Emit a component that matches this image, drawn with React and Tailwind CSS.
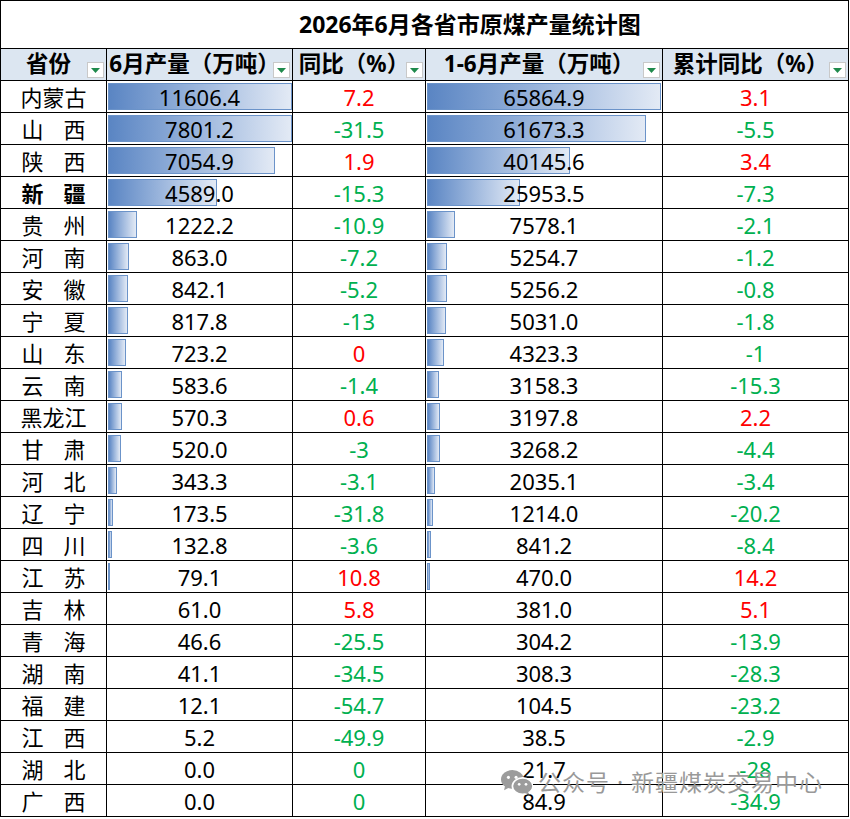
import React from "react";

const RED = "text-[#ff0000]";
const GREEN = "text-[#00b050]";

// [province, June output, yoy, Jan-Jun output, cumulative yoy, yoy red?, cum red?]
const rows = [
  ["内蒙古", 11606.4, "7.2", 65864.9, "3.1", true, true],
  ["山西", 7801.2, "-31.5", 61673.3, "-5.5", false, false],
  ["陕西", 7054.9, "1.9", 40145.6, "3.4", true, true],
  ["新疆", 4589.0, "-15.3", 25953.5, "-7.3", false, false],
  ["贵州", 1222.2, "-10.9", 7578.1, "-2.1", false, false],
  ["河南", 863.0, "-7.2", 5254.7, "-1.2", false, false],
  ["安徽", 842.1, "-5.2", 5256.2, "-0.8", false, false],
  ["宁夏", 817.8, "-13", 5031.0, "-1.8", false, false],
  ["山东", 723.2, "0", 4323.3, "-1", true, false],
  ["云南", 583.6, "-1.4", 3158.3, "-15.3", false, false],
  ["黑龙江", 570.3, "0.6", 3197.8, "2.2", true, true],
  ["甘肃", 520.0, "-3", 3268.2, "-4.4", false, false],
  ["河北", 343.3, "-3.1", 2035.1, "-3.4", false, false],
  ["辽宁", 173.5, "-31.8", 1214.0, "-20.2", false, false],
  ["四川", 132.8, "-3.6", 841.2, "-8.4", false, false],
  ["江苏", 79.1, "10.8", 470.0, "14.2", true, true],
  ["吉林", 61.0, "5.8", 381.0, "5.1", true, true],
  ["青海", 46.6, "-25.5", 304.2, "-13.9", false, false],
  ["湖南", 41.1, "-34.5", 308.3, "-28.3", false, false],
  ["福建", 12.1, "-54.7", 104.5, "-23.2", false, false],
  ["江西", 5.2, "-49.9", 38.5, "-2.9", false, false],
  ["湖北", 0.0, "0", 21.7, "-28", false, false],
  ["广西", 0.0, "0", 84.9, "-34.9", false, false],
];

const FilterBtn = () => (
  <span className="absolute right-[2px] bottom-[2px] w-[17px] h-[16px] bg-white border border-[#c9c9c9] flex items-center justify-center">
    <svg width="9" height="5" viewBox="0 0 9 5">
      <path d="M0 0 H9 L4.5 5 Z" fill="#1f8a4c" />
    </svg>
  </span>
);

const Head = ({ children }) => (
  <th className="relative border border-black bg-[#dce6f1] p-0 pr-[10px] h-[32px] text-[22.5px] font-bold text-center leading-none whitespace-nowrap">
    {children}
    <FilterBtn />
  </th>
);

const Bar = ({ width, min }) =>
  width > min ? (
    <div
      className="absolute left-[1px] top-[2px] bottom-[2px] border border-[#6b93c9] bg-gradient-to-r from-[#5a85c3] to-[#e3eaf5]"
      style={{ width }}
    />
  ) : null;

const BarCell = ({ value, width, min }) => (
  <td className="relative border border-black p-0 h-[32px] text-center">
    <Bar width={width} min={min} />
    <span className="relative">{value.toFixed(1)}</span>
  </td>
);

const Province = ({ name, bold }) => (
  <td className="border border-black p-0 h-[32px]">
    <div className={`flex justify-center ${bold ? "font-bold" : ""}`}>
      {name.length === 2 ? (
        <span className="flex justify-between w-[64px]">
          <span>{name[0]}</span>
          <span>{name[1]}</span>
        </span>
      ) : (
        <span>{name}</span>
      )}
    </div>
  </td>
);

const WeChat = () => (
  <svg className="shrink-0" width="32" height="25" viewBox="0 0 31 24">
    <ellipse cx="11" cy="9" rx="11" ry="9" fill="#9c9c9c" />
    <path d="M4 15 L3 19.5 L8.5 16.5 Z" fill="#9c9c9c" />
    <circle cx="7.2" cy="7" r="1.5" fill="#fff" />
    <circle cx="14.6" cy="7" r="1.5" fill="#fff" />
    <ellipse cx="21" cy="15.5" rx="10" ry="8" fill="#9c9c9c" stroke="#fff" strokeWidth="1.6" />
    <path d="M26 21 L28 24 L22.5 22 Z" fill="#9c9c9c" />
    <circle cx="17.6" cy="13.8" r="1.3" fill="#fff" />
    <circle cx="24.2" cy="13.8" r="1.3" fill="#fff" />
  </svg>
);

export default function App() {
  return (
    <div className="relative w-[850px] bg-white text-black font-['Noto_Sans','Noto_Sans_CJK_SC',sans-serif]">
      <table className="table-fixed border-collapse w-[848px] text-[22px] leading-none">
        <colgroup>
          <col className="w-[106px]" />
          <col className="w-[186px]" />
          <col className="w-[133px]" />
          <col className="w-[237px]" />
          <col className="w-[186px]" />
        </colgroup>
        <thead>
          <tr>
            <th colSpan={5} className="border border-black h-[48px] p-0 text-left">
              <span className="pl-[298px] text-[23px] font-bold">2026年6月各省市原煤产量统计图</span>
            </th>
          </tr>
          <tr>
            <Head>省份</Head>
            <Head>6月产量（万吨）</Head>
            <Head>同比（%）</Head>
            <Head>1-6月产量（万吨）</Head>
            <Head>累计同比（%）</Head>
          </tr>
        </thead>
        <tbody>
          {rows.map(([name, june, yoy, cum, cumYoy, yoyRed, cumRed]) => (
            <tr key={name}>
              <Province name={name} bold={name === "新疆"} />
              <BarCell value={june} width={Math.min(184, 0.5 + june * 0.02364)} min={2.2} />
              <td className={`border border-black p-0 h-[32px] text-center ${yoyRed ? RED : GREEN}`}>{yoy}</td>
              <BarCell value={cum} width={Math.min(234, 1.3 + cum * 0.00353)} min={2.8} />
              <td className={`border border-black p-0 h-[32px] text-center ${cumRed ? RED : GREEN}`}>{cumYoy}</td>
            </tr>
          ))}
        </tbody>
      </table>

      <div className="absolute left-[501px] top-[770px] flex items-center gap-[5px] pointer-events-none">
        <WeChat />
        <span className="text-[23px] text-[#999999] tracking-[1px] leading-none">公众号 · 新疆煤炭交易中心</span>
      </div>
    </div>
  );
}
